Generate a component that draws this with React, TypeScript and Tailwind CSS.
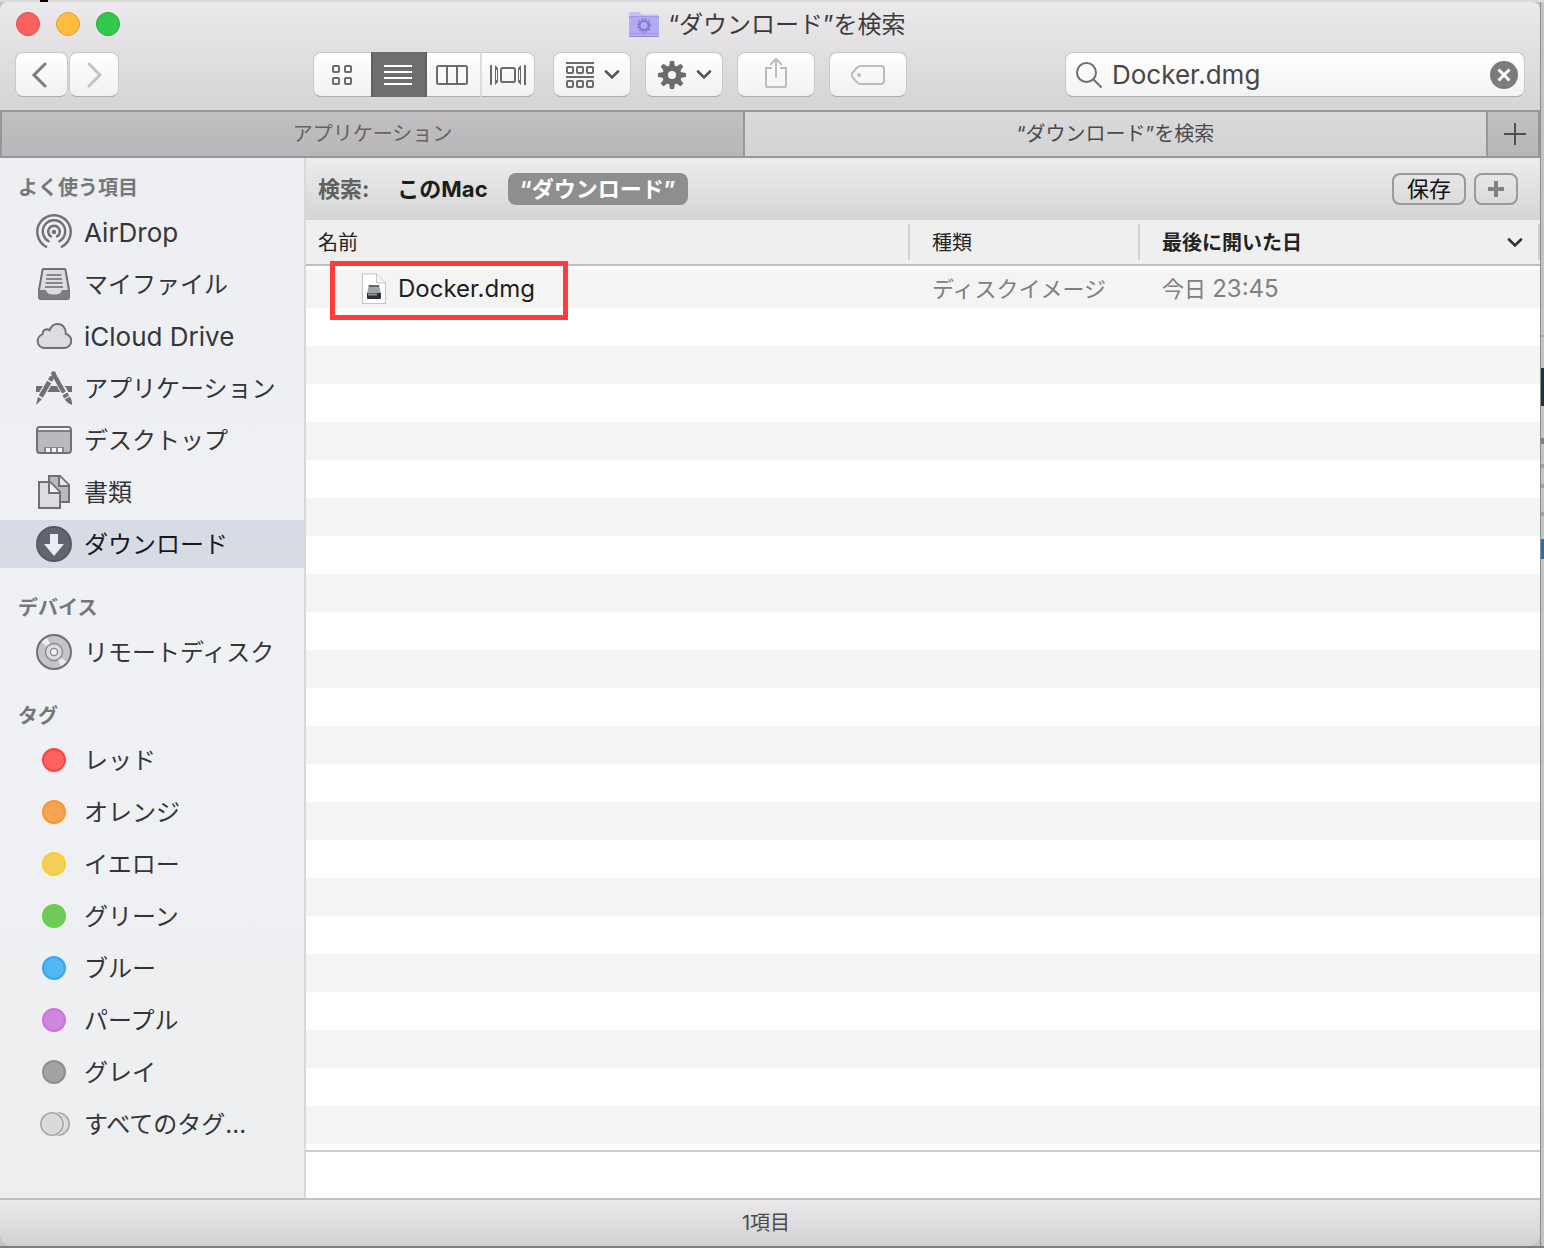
import { useState, type ReactNode } from "react";

const BUTTON =
  "flex h-[45px] items-center justify-center rounded-lg border border-[#c9c7ca] border-b-[#acaaad] bg-linear-to-b from-white to-[#f1f1f1] text-[#6b6b6b]";

function Gear({ size, className = "" }: { size: number; className?: string }) {
  return (
    <svg width={size} height={size} viewBox="0 0 28 28" className={className} aria-hidden="true">
      <g fill="currentColor">
        {[0, 45, 90, 135].map((a) => (
          <path key={a} d="M12 0h4l1 6v16l-1 6h-4l-1-6V6z" transform={`rotate(${a} 14 14)`} />
        ))}
      </g>
      <circle cx="14" cy="14" r="7" fill="none" stroke="currentColor" strokeWidth="5.4" />
      <circle cx="14" cy="14" r="4" className="fill-[#f8f8f8]" />
    </svg>
  );
}

function FolderIcon() {
  return (
    <svg width="32" height="28" viewBox="0 0 32 28" aria-hidden="true">
      <path d="M1 3a2 2 0 0 1 2-2h8l3 2.500h15a2 2 0 0 1 2 2V25H1z" fill="#c6bff6" />
      <path d="M1 6h30v17a2 2 0 0 1-2 2H3a2 2 0 0 1-2-2z" fill="#b3aaf1" />
      <path d="M1 5.500h30M1 22.500h30" stroke="#a298e8" strokeWidth="1" />
      <path d="M1 25.500h30" stroke="#938bcb" strokeWidth="1" />
      <circle cx="16" cy="14.500" r="6.200" fill="none" stroke="#8377d8" strokeWidth="2" strokeDasharray="1.600 1.646" />
      <circle cx="16" cy="14.500" r="4.500" fill="none" stroke="#8377d8" strokeWidth="2" />
    </svg>
  );
}

function Chevron({ className = "" }: { className?: string }) {
  return (
    <svg width="16" height="10" viewBox="0 0 16 10" className={className} aria-hidden="true">
      <path d="M2 1.500l6 6 6-6" fill="none" stroke="currentColor" strokeWidth="2.600" strokeLinecap="round" />
    </svg>
  );
}

function GridIcon() {
  return (
    <svg width="22" height="22" viewBox="0 0 22 22" aria-hidden="true" fill="none" stroke="currentColor" strokeWidth="2">
      {[2, 14].map((x) => [2, 14].map((y) => <rect key={`${x}-${y}`} x={x} y={y} width="6" height="6" rx="1" />))}
    </svg>
  );
}

function ListIcon() {
  return (
    <svg width="28" height="20" viewBox="0 0 28 20" aria-hidden="true" stroke="white" strokeWidth="2">
      <path d="M0 1h28M0 7h28M0 13h28M0 19h28" />
    </svg>
  );
}

function ColumnsIcon() {
  return (
    <svg width="32" height="20" viewBox="0 0 32 20" aria-hidden="true" fill="none" stroke="currentColor" strokeWidth="2">
      <rect x="1" y="1" width="30" height="18" rx="1.500" />
      <path d="M11 1v18M21 1v18" />
    </svg>
  );
}

function CoverFlowIcon() {
  return (
    <svg width="36" height="20" viewBox="0 0 36 20" aria-hidden="true" fill="none" stroke="currentColor" strokeWidth="2">
      <rect x="11" y="3" width="14" height="14" rx="1.500" />
      <path d="M1 0v20M35 0v20" />
      <path d="M5 0l3 3v14l-3 3zM31 0l-3 3v14l3 3z" fill="currentColor" stroke="none" />
      <path d="M6.500 5v10M29.500 5v10" stroke="#f8f8f8" strokeWidth="1" />
    </svg>
  );
}

function ArrangeIcon() {
  return (
    <svg width="28" height="26" viewBox="0 0 28 26" aria-hidden="true" fill="none" stroke="currentColor" strokeWidth="2">
      <path d="M0 1h28M0 15h28" />
      {[1, 11, 21].map((x) => [5, 19].map((y) => <rect key={`${x}-${y}`} x={x} y={y} width="6" height="6" rx="1" />))}
    </svg>
  );
}

function ShareIcon() {
  return (
    <svg width="24" height="32" viewBox="0 0 24 32" aria-hidden="true" fill="none" stroke="#bdbdbd" strokeWidth="2">
      <path d="M8 11H2v18a1 1 0 0 0 1 1h18a1 1 0 0 0 1-1V11h-6" />
      <path d="M12 21V2M6 8l6-6 6 6" />
    </svg>
  );
}

function TagIcon() {
  return (
    <svg width="34" height="20" viewBox="0 0 34 20" aria-hidden="true" fill="none" stroke="#bdbdbd" strokeWidth="2">
      <path d="M10 1h20a3 3 0 0 1 3 3v12a3 3 0 0 1-3 3H10c-2 0-3-.6-4.200-1.800L1.800 12.500c-1.300-1.500-1.300-3.500 0-5L5.800 2.800C7 1.600 8 1 10 1z" />
      <circle cx="8" cy="10" r="2" fill="#bdbdbd" stroke="none" />
    </svg>
  );
}

function AirDropIcon() {
  return (
    <svg width="36" height="36" viewBox="0 0 36 36" aria-hidden="true" fill="none" stroke="currentColor" strokeWidth="2.400" strokeLinecap="round">
      <circle cx="18" cy="18" r="2.200" fill="currentColor" stroke="none" />
      <path d="M15 22.500a5.800 5.800 0 1 1 6 0" />
      <path d="M12.600 27.200a11.200 11.200 0 1 1 10.800 0" />
      <path d="M10.200 32.700a16.700 16.700 0 1 1 15.600 0" />
    </svg>
  );
}

function TrayIcon() {
  return (
    <svg width="34" height="34" viewBox="0 0 34 34" aria-hidden="true">
      <path d="M6.500 2h21a1 1 0 0 1 1 1L32 23v7a2 2 0 0 1-2 2H4a2 2 0 0 1-2-2v-7L5.500 3a1 1 0 0 1 1-1z" fill="#dcdde0" stroke="#6e7074" strokeWidth="2" />
      <path d="M2 23h7c1 3.500 3.500 4.500 8 4.500s7-1 8-4.500h7v7a2 2 0 0 1-2 2H4a2 2 0 0 1-2-2z" fill="#7b7d81" />
      <path d="M9.500 8h15M9 12h16M8.500 16h17M8 20h18" stroke="#85878b" strokeWidth="2" />
    </svg>
  );
}

function CloudIcon() {
  return (
    <svg width="36" height="26" viewBox="0 0 36 26" aria-hidden="true">
      <path
        d="M8 25a7 7 0 0 1-1.500-13.600C6.300 7.500 10 4.800 13.500 7.200 15 3.500 17.500 1 21.300 1c5.400 0 9 4.200 8.400 9.800A7.200 7.200 0 0 1 28 25z"
        fill="#dcdde0"
        stroke="#6e7074"
        strokeWidth="2"
      />
    </svg>
  );
}

function AppsIcon() {
  return (
    <svg width="36" height="34" viewBox="0 0 36 34" aria-hidden="true">
      <path d="M0 15h36v6H0z" fill="currentColor" />
      <g fill="none" strokeLinecap="butt">
        <path d="M17.500 2L34 31" stroke="#edeff3" strokeWidth="7" />
        <path d="M15.500 7L1 32" stroke="#edeff3" strokeWidth="7" />
        <path d="M17.500 3L28 21.500" stroke="currentColor" strokeWidth="4.400" />
        <path d="M28.900 23l1.700 3" stroke="currentColor" strokeWidth="5.600" />
        <path d="M14.700 8.400L14 9.600" stroke="currentColor" strokeWidth="5" />
        <path d="M13.200 11L4.800 25.500" stroke="currentColor" strokeWidth="4.600" />
      </g>
      <circle cx="17.500" cy="2.600" r="2.400" fill="currentColor" />
      <circle cx="15.300" cy="7.400" r="2.400" fill="currentColor" />
      <path d="M28.700 28.500l5-2.900c1.800 2.200 2.300 4.800 2.300 8.400-3-1.200-5.500-2.700-7.300-5.500z" fill="currentColor" />
      <path d="M1.900 26l4 2.300L0 34z" fill="currentColor" />
    </svg>
  );
}

function DesktopIcon() {
  return (
    <svg width="36" height="28" viewBox="0 0 36 28" aria-hidden="true">
      <rect x="1" y="1" width="34" height="26" rx="3" fill="#b9babd" stroke="#6e7074" strokeWidth="2" />
      <path d="M2 4a2 2 0 0 1 2-2h28a2 2 0 0 1 2 2z" fill="#f4f5f7" />
      <path d="M2 5h32" stroke="#6e7074" strokeWidth="1.600" />
      <path d="M8 21h20v5H8z" fill="#85878b" />
      <path d="M10 22h4v4h-4zM16 22h4v4h-4zM22 22h4v4h-4z" fill="#f4f5f7" />
    </svg>
  );
}

function DocsIcon() {
  return (
    <svg width="34" height="36" viewBox="0 0 34 36" aria-hidden="true" stroke="#6e7074" strokeWidth="2">
      <path d="M12 2h11l9 9v17H12z" fill="#b9babd" />
      <path d="M22 2v10h10" fill="#e6e7ea" />
      <path d="M2 8h11l10 10v16H2z" fill="#dcdde0" />
      <path d="M12 8v11h11" fill="#f0f1f3" />
    </svg>
  );
}

function DownloadIcon() {
  return (
    <svg width="36" height="36" viewBox="0 0 36 36" aria-hidden="true">
      <circle cx="18" cy="18" r="17" fill="#61656e" stroke="#555962" strokeWidth="2" />
      <path d="M14 8h8v10h6L18 30 8 18h6z" fill="#e9edf2" />
    </svg>
  );
}

function DiscIcon() {
  return (
    <svg width="36" height="36" viewBox="0 0 36 36" aria-hidden="true">
      <circle cx="18" cy="18" r="17" fill="#c3c4c7" />
      <path d="M18 18L4.500 7.500A17 17 0 0 1 10.500 2.700zM18 18l13.500 10.500a17 17 0 0 1-6 4.800z" fill="#ebecee" />
      <circle cx="18" cy="18" r="17" fill="none" stroke="#6e7074" strokeWidth="2" />
      <circle cx="18" cy="18" r="8.500" fill="#dcdde0" stroke="#85878b" strokeWidth="1.300" />
      <circle cx="18" cy="18" r="3.600" fill="#f0f1f3" stroke="#85878b" strokeWidth="1.300" />
    </svg>
  );
}

function AllTagsIcon() {
  return (
    <svg width="32" height="24" viewBox="0 0 32 24" aria-hidden="true" fill="#d9dadc" stroke="#a8a9ab" strokeWidth="1.600">
      <circle cx="20" cy="12" r="11.200" />
      <circle cx="14" cy="12" r="12" stroke="#edeff1" />
      <circle cx="14" cy="12" r="11.200" />
    </svg>
  );
}

function DiskImageIcon() {
  return (
    <svg width="26" height="32" viewBox="0 0 26 32" aria-hidden="true">
      <path d="M1.500 1h14l9 9v20.500h-23z" fill="white" stroke="#c6c6c6" strokeWidth="1.200" />
      <path d="M15.500 1v9h9" fill="#f3f3f3" stroke="#c6c6c6" />
      <path d="M8 12h10l2 9H6z" fill="#9ba6aa" />
      <path d="M8 12h10l.5 2h-11z" fill="#5d686c" />
      <path d="M6 20h14v5a1 1 0 0 1-1 1H7a1 1 0 0 1-1-1z" fill="#2c3133" />
      <path d="M7 21.500h9" stroke="#8e989b" strokeWidth="2" />
    </svg>
  );
}

type Item = { label: string; icon: ReactNode; latin?: boolean };

const favorites: Item[] = [
  { label: "AirDrop", icon: <AirDropIcon />, latin: true },
  { label: "マイファイル", icon: <TrayIcon /> },
  { label: "iCloud Drive", icon: <CloudIcon />, latin: true },
  { label: "アプリケーション", icon: <AppsIcon /> },
  { label: "デスクトップ", icon: <DesktopIcon /> },
  { label: "書類", icon: <DocsIcon /> },
  { label: "ダウンロード", icon: <DownloadIcon /> },
];

const devices: Item[] = [{ label: "リモートディスク", icon: <DiscIcon /> }];

const dot = (classes: string) => <span className={`size-6 rounded-full border-2 ${classes}`} />;

const tags: Item[] = [
  { label: "レッド", icon: dot("border-[#fb4444] bg-[#fc625f]") },
  { label: "オレンジ", icon: dot("border-[#fb952b] bg-[#f5a54f]") },
  { label: "イエロー", icon: dot("border-[#fccb2f] bg-[#f3ce58]") },
  { label: "グリーン", icon: dot("border-[#63d344] bg-[#72c95b]") },
  { label: "ブルー", icon: dot("border-[#32a9f3] bg-[#53b7f2]") },
  { label: "パープル", icon: dot("border-[#c873dd] bg-[#cf88e0]") },
  { label: "グレイ", icon: dot("border-[#8f8f91] bg-[#a3a3a5]") },
  { label: "すべてのタグ...", icon: <AllTagsIcon /> },
];

function Section({ title, items, first = false, selected }: { title: string; items: Item[]; first?: boolean; selected?: string }) {
  return (
    <section className={first ? "pt-4" : "pt-[26px]"}>
      <h2 className="mb-1.5 pl-[18px] text-[20px] leading-7 font-bold text-[#75777b]">{title}</h2>
      <ul className="flex flex-col gap-1">
        {items.map((item) => (
          <li key={item.label}>
            <a
              href="#"
              className={`flex h-12 items-center gap-3 pl-9 leading-8 ${item.latin ? "text-[26px]" : "text-[24px]"} ${
                item.label === selected ? "bg-[#d6dbe4] text-[#15191f]" : "text-[#343538]"
              }`}
            >
              <span className="flex w-9 shrink-0 justify-center text-[#6e7074]">{item.icon}</span>
              <span className="pt-0.5 whitespace-nowrap">{item.label}</span>
            </a>
          </li>
        ))}
      </ul>
    </section>
  );
}

function Toolbar() {
  const [query, setQuery] = useState("Docker.dmg");
  return (
    <header className="bg-linear-to-b from-[#ebe9ec] to-[#d6d4d7]">
      <div className="grid h-11 grid-cols-[1fr_auto_1fr] items-center pr-[22px] pl-4">
        <div className="flex gap-4">
          <button aria-label="閉じる" className="size-6 rounded-full border border-[#e04a48] bg-[#fc605c]" />
          <button aria-label="しまう" className="size-6 rounded-full border border-[#dfa23a] bg-[#fdbc40]" />
          <button aria-label="拡大" className="size-6 rounded-full border border-[#27ab35] bg-[#34c84a]" />
        </div>
        <h1 className="flex items-center gap-2 pt-0.5 text-[24px] leading-8 text-[#3c3a3d]">
          <FolderIcon />
          “ダウンロード”を検索
        </h1>
      </div>
      <div className="flex h-16 items-start pt-1.5 pr-[15px] pl-[15px]">
        <div className="flex gap-px">
          <button aria-label="戻る" className={`${BUTTON} w-[53px]`}>
            <svg width="16" height="26" viewBox="0 0 16 26" className="mr-1.5" fill="none" stroke="#7c7c7c" strokeWidth="3" strokeLinecap="round">
              <path d="M14 2L3 13l11 11" />
            </svg>
          </button>
          <button aria-label="進む" className={`${BUTTON} w-[50px]`}>
            <svg width="16" height="26" viewBox="0 0 16 26" className="ml-0.5" fill="none" stroke="#c4c4c4" strokeWidth="3" strokeLinecap="round">
              <path d="M2 2l11 11L2 24" />
            </svg>
          </button>
        </div>
        <div className="grow-[11]" />
        <div className="flex h-[45px]">
          <button aria-label="アイコン" className={`${BUTTON} w-[58px] rounded-r-none border-r-0`}>
            <GridIcon />
          </button>
          <button aria-label="リスト" aria-pressed="true" className="flex w-14 items-center justify-center border-x-2 border-[#616161] bg-[#6e6e6e] pr-0.5">
            <ListIcon />
          </button>
          <button aria-label="カラム" className={`${BUTTON} w-[53px] rounded-none border-x-0 pr-0.5`}>
            <ColumnsIcon />
          </button>
          <button aria-label="Cover Flow" className={`${BUTTON} w-[55px] rounded-l-none border-l-2 border-l-[#dddddd]`}>
            <CoverFlowIcon />
          </button>
        </div>
        <div className="ml-[18px] flex gap-3.5">
          <button aria-label="項目の並び順" className={`${BUTTON} w-[78px] gap-2.5 pl-0.5`}>
            <ArrangeIcon />
            <Chevron className="text-[#555]" />
          </button>
          <button aria-label="操作" className={`${BUTTON} w-[78px] gap-2.5 pl-0.5`}>
            <Gear size={28} />
            <Chevron className="text-[#555]" />
          </button>
          <button aria-label="共有" disabled className={`${BUTTON} w-[78px] pb-1`}>
            <ShareIcon />
          </button>
          <button aria-label="タグを編集" disabled className={`${BUTTON} w-[78px]`}>
            <TagIcon />
          </button>
        </div>
        <div className="grow-[9]" />
        <div className="flex h-[45px] w-[460px] items-center rounded-lg border border-[#c9c7ca] border-b-[#acaaad] bg-linear-to-b from-white to-[#f3f3f3] pr-1.5 pl-2.5">
          <svg width="26" height="26" viewBox="0 0 26 26" fill="none" stroke="#6f6f6f" strokeWidth="2" aria-hidden="true">
            <circle cx="10.500" cy="10.500" r="9.500" />
            <path d="M17.500 17.500l8 8" />
          </svg>
          <input
            aria-label="検索"
            value={query}
            onChange={(e) => setQuery(e.target.value)}
            className="ml-2.5 min-w-0 flex-1 bg-transparent text-[26px] leading-8 text-[#474747] outline-none"
          />
          <button aria-label="検索を消去" onClick={() => setQuery("")}>
            <svg width="28" height="28" viewBox="0 0 28 28">
              <circle cx="14" cy="14" r="14" fill="#7b7b7b" />
              <path d="M8.500 8.500l11 11M19.500 8.500l-11 11" stroke="white" strokeWidth="3" />
            </svg>
          </button>
        </div>
      </div>
    </header>
  );
}

function TabBar() {
  return (
    <div role="tablist" className="flex h-12 border-2 border-[#989698] text-[20px] leading-7">
      <button role="tab" aria-selected="false" className="flex-1 bg-linear-to-b from-[#c1bfc1] to-[#b8b6b8] text-[#656365]">
        アプリケーション
      </button>
      <button role="tab" aria-selected="true" className="flex-1 border-x-2 border-[#989698] bg-linear-to-b from-[#dad9da] to-[#d4d2d5] text-[#4b494b]">
        “ダウンロード”を検索
      </button>
      <button aria-label="新規タブ" className="flex w-[50px] items-center justify-center bg-linear-to-b from-[#c1bfc1] to-[#b8b6b8]">
        <svg width="22" height="22" viewBox="0 0 22 22" stroke="#4f4f4f" strokeWidth="2" className="ml-1">
          <path d="M11 0v22M0 11h22" />
        </svg>
      </button>
    </div>
  );
}

function SearchScope() {
  return (
    <div className="flex h-[62px] items-center bg-linear-to-b from-[#ececec] to-[#d5d5d5] pr-[22px] pl-3 text-[22px] leading-8 font-bold">
      <span className="text-[#606060]">検索:</span>
      <button className="ml-7 text-[#1c1c1c]">このMac</button>
      <button aria-pressed="true" className="ml-5 flex h-8 w-[180px] items-center justify-center rounded-lg bg-[#8e8e8e] text-white">
        “ダウンロード”
      </button>
      <button className="ml-auto flex h-8 w-[74px] items-center justify-center rounded-lg border-2 border-[#9a9a9a] font-normal text-[#111111]">
        保存
      </button>
      <button aria-label="条件を追加" className="ml-2 flex h-8 w-11 items-center justify-center rounded-lg border-2 border-[#9a9a9a]">
        <svg width="16" height="16" viewBox="0 0 16 16" stroke="#828282" strokeWidth="4">
          <path d="M8 0v16M0 8h16" />
        </svg>
      </button>
    </div>
  );
}

function FileList() {
  return (
    <>
      <table className="w-full table-fixed border-separate border-spacing-0 text-left">
        <thead>
          <tr className="bg-[#efefef] text-[20px] leading-7 text-[#222222]">
            <th scope="col" className="border-b-2 border-[#bdbdbd] px-0 py-1 font-normal">
              <div className="flex h-9 items-center pt-0.5 pl-3">名前</div>
            </th>
            <th scope="col" className="w-[230px] border-b-2 border-[#bdbdbd] px-0 py-1 font-normal">
              <div className="flex h-9 items-center border-l-2 border-[#d2d2d2] pt-0.5 pl-[22px]">種類</div>
            </th>
            <th scope="col" aria-sort="descending" className="w-[402px] border-b-2 border-[#bdbdbd] px-0 py-1 font-bold">
              <div className="flex h-9 items-center justify-between border-x-2 border-[#d2d2d2] pt-0.5 pr-[15px] pl-[22px]">
                最後に開いた日
                <Chevron className="text-[#333]" />
              </div>
            </th>
          </tr>
        </thead>
        <tbody>
          <tr className="bg-[#f4f4f4] text-[22px] leading-8 text-[#808080]">
            <td className="relative h-[42px] border-t-4 border-white p-0 pl-[55px]">
              <div className="flex items-center gap-[11px] text-[24px] text-[#1e1e1e]">
                <DiskImageIcon />
                Docker.dmg
              </div>
              <div className="pointer-events-none absolute -top-[9px] left-6 h-[59px] w-[238px] border-[5px] border-[#ff3b3b]" />
            </td>
            <td className="border-t-4 border-white p-0 pl-6">ディスクイメージ</td>
            <td className="border-t-4 border-white p-0 pl-6">
              今日 <span className="text-[24px]">23:45</span>
            </td>
          </tr>
        </tbody>
      </table>
      <div className="flex-1 bg-[repeating-linear-gradient(to_bottom,#ffffff_0,#ffffff_38px,#f4f4f4_38px,#f4f4f4_76px)]" />
      <div className="h-12 border-t-2 border-[#cbcbcb] bg-white" />
    </>
  );
}

/* Sliver of the browser page that shows behind the window's right edge. */
function BackgroundSliver() {
  return (
    <div aria-hidden="true" className="flex w-1 shrink-0 flex-col border-l border-[#8c8c8c] bg-[#c4c4c4]">
      <div className="mt-[333px] h-0.5 bg-[#a9a9a9]" />
      <div className="mt-[31px] h-[38px] bg-[#1c3342]" />
      <div className="mt-8 h-1.5 bg-[#7c8286]" />
      <div className="mt-5 h-1 bg-[#9aa0a4]" />
      <div className="mt-4 h-1 bg-[#9aa0a4]" />
      <div className="mt-6 h-1 bg-[#9aa0a4]" />
      <div className="mt-[23px] h-5 bg-[#1878ab]" />
    </div>
  );
}

export default function App() {
  return (
    <div className="flex min-h-screen flex-col bg-[#c4c4c4] font-['Inter','Noto_Sans_CJK_JP',sans-serif]">
      <div className="flex h-0.5 bg-[#dcdcd9] pl-10">
        <div className="w-2 bg-black" />
      </div>
      <div className="flex flex-1">
        <div className="flex min-w-0 flex-1 flex-col overflow-hidden rounded-t-lg rounded-b-xl">
          <Toolbar />
          <TabBar />
          <div className="flex flex-1">
            <nav aria-label="サイドバー" className="w-[306px] shrink-0 border-r-2 border-[#d7d8dc] bg-linear-to-b from-[#edeef2] via-[#eff1f5] to-[#edeeef]">
              <Section title="よく使う項目" items={favorites} first selected="ダウンロード" />
              <Section title="デバイス" items={devices} />
              <Section title="タグ" items={tags} />
            </nav>
            <main className="flex min-w-0 flex-1 flex-col bg-white">
              <SearchScope />
              <FileList />
            </main>
          </div>
          <footer className="flex h-12 items-center justify-center border-t-2 border-[#c1c0c2] bg-linear-to-b from-[#ebe9ec] to-[#d2d0d3] pr-2 text-[20px] leading-7 text-[#4a4a4a]">
            1項目
          </footer>
        </div>
        <BackgroundSliver />
      </div>
      <div className="h-0.5 bg-[#7d7d7d]" />
    </div>
  );
}
